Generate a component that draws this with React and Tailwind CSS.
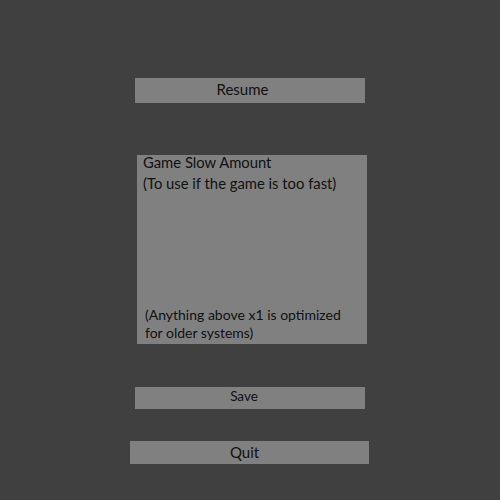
import React from "react";

const App = () => {
  return (
    <div
      className="w-[500px] h-[500px] bg-[#404040] flex flex-col items-center pt-[78px] text-[#111111]"
      style={{ fontFamily: "Lato, 'Open Sans', sans-serif" }}
    >
      {/* Resume */}
      <button className="w-[230px] h-[25px] bg-[#808080] text-[15px] leading-none flex items-center justify-center pr-[15px] pb-[2px]">
        Resume
      </button>

      {/* Slow amount panel */}
      <div className="mt-[52px] ml-[4px] w-[230px] h-[189px] bg-[#808080] flex flex-col justify-between pb-[2px]">
        <div className="pl-[6px] mt-[-3px] text-[14.8px] leading-[21px]">
          <div>Game Slow Amount</div>
          <div>(To use if the game is too fast)</div>
        </div>
        <div className="pl-[8px] text-[14px] leading-[18px]">
          <div>(Anything above x1 is optimized</div>
          <div>for older systems)</div>
        </div>
      </div>

      {/* Save */}
      <button className="mt-[43px] w-[230px] h-[22px] bg-[#808080] text-[13.5px] leading-none flex items-center justify-center pr-[12px] pb-[2px]">
        Save
      </button>

      {/* Quit */}
      <button className="mt-[32px] ml-[-1px] w-[239px] h-[23px] bg-[#808080] text-[15px] leading-none flex items-center justify-center pr-[10px]">
        Quit
      </button>
    </div>
  );
};

export default App;
